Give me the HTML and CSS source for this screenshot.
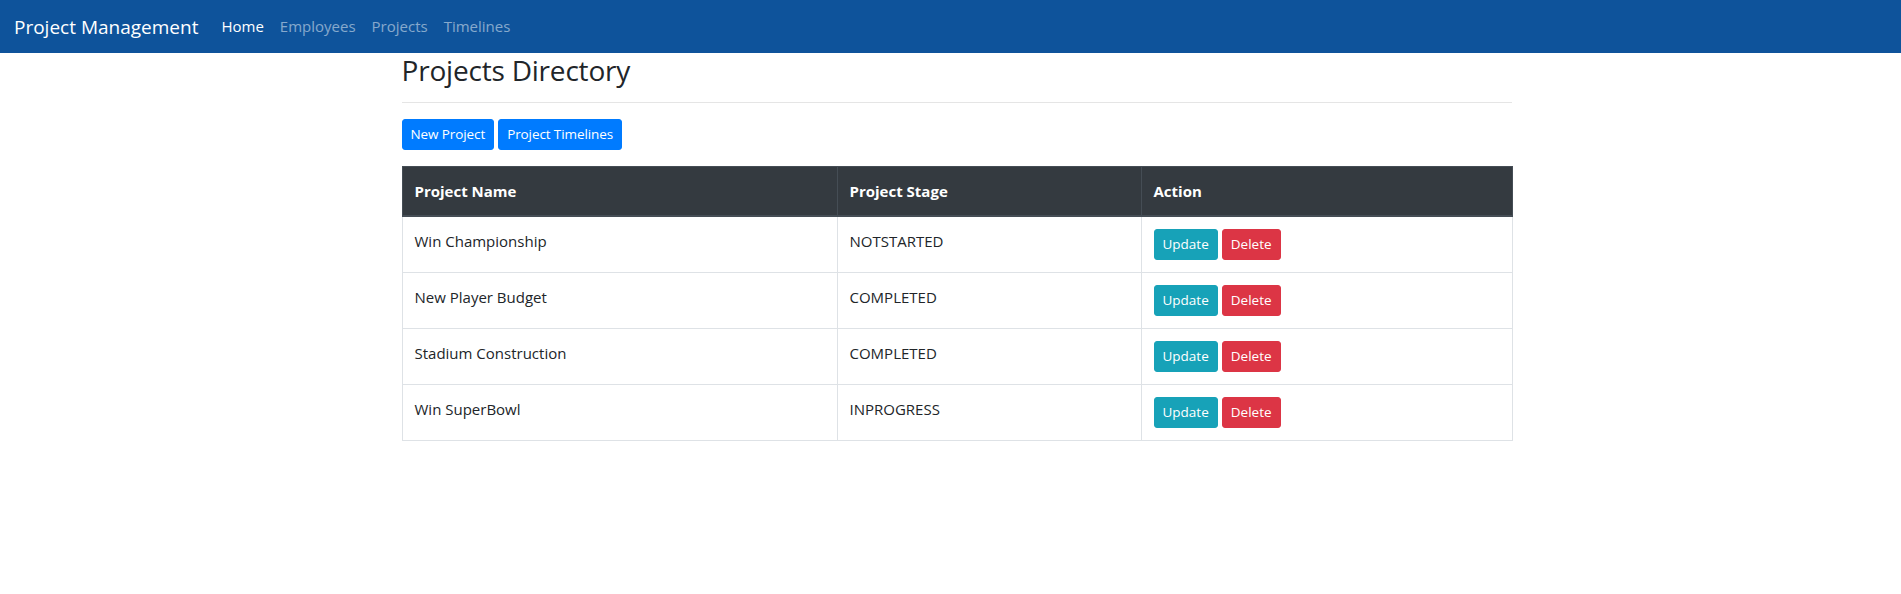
FILE: index.html
```html
<!DOCTYPE html>
<html lang="en">
<head>
<meta charset="utf-8">
<title>Project Management</title>
<link rel="stylesheet" href="styles.css">
</head>
<body>
<nav class="navbar">
  <a class="brand" href="#">Project Management</a>
  <ul class="nav">
    <li><a class="nav-link active" href="#">Home</a></li>
    <li><a class="nav-link" href="#">Employees</a></li>
    <li><a class="nav-link" href="#">Projects</a></li>
    <li><a class="nav-link" href="#">Timelines</a></li>
  </ul>
</nav>
<main class="container">
  <h2 class="title">Projects Directory</h2>
  <hr class="rule">
  <div class="toolbar">
    <a class="btn btn-primary" href="#">New Project</a>
    <a class="btn btn-primary" href="#">Project Timelines</a>
  </div>
  <table class="table">
    <colgroup>
      <col class="col-name">
      <col class="col-stage">
      <col class="col-action">
    </colgroup>
    <thead>
      <tr><th>Project Name</th><th>Project Stage</th><th>Action</th></tr>
    </thead>
    <tbody>
      <tr>
        <td>Win Championship</td><td>NOTSTARTED</td>
        <td><div class="actions"><a class="btn btn-info" href="#">Update</a><a class="btn btn-danger" href="#">Delete</a></div></td>
      </tr>
      <tr>
        <td>New Player Budget</td><td>COMPLETED</td>
        <td><div class="actions"><a class="btn btn-info" href="#">Update</a><a class="btn btn-danger" href="#">Delete</a></div></td>
      </tr>
      <tr>
        <td>Stadium Construction</td><td>COMPLETED</td>
        <td><div class="actions"><a class="btn btn-info" href="#">Update</a><a class="btn btn-danger" href="#">Delete</a></div></td>
      </tr>
      <tr>
        <td>Win SuperBowl</td><td>INPROGRESS</td>
        <td><div class="actions"><a class="btn btn-info" href="#">Update</a><a class="btn btn-danger" href="#">Delete</a></div></td>
      </tr>
    </tbody>
  </table>
</main>
</body>
</html>
```
FILE: styles.css
```css
* { box-sizing: border-box; }
html, body { margin: 0; padding: 0; }
body {
  font-family: "Open Sans", "Noto Sans", "DejaVu Sans", sans-serif;
  font-size: 16px;
  line-height: 1.5;
  color: #212529;
  background: #fff;
}
a { text-decoration: none; }

.navbar {
  display: flex;
  align-items: center;
  height: 53px;
  padding: 0 14px;
  background: #0e539b;
}
.brand {
  color: #fff;
  font-size: 19px;
  line-height: 30px;
  margin-right: 15px;
}
.nav {
  display: flex;
  list-style: none;
  margin: 0;
  padding: 0;
}
.nav-link {
  display: block;
  padding: 8px 8px;
  font-size: 15px;
  color: rgba(255, 255, 255, 0.5);
}
.nav-link.active { color: #fff; }

.container {
  width: 1110px;
  margin-left: calc(50% - 549px);
}
.title {
  margin: 0;
  padding-top: 1px;
  font-size: 28px;
  font-weight: 500;
  line-height: 1.2;
  color: #212529;
  letter-spacing: -0.2px;
}
.rule {
  margin: 14px 0 16px;
  border: 0;
  border-top: 1px solid rgba(0, 0, 0, 0.1);
}
.toolbar {
  display: flex;
  gap: 4px;
  margin-bottom: 16px;
}
.btn {
  display: inline-block;
  padding: 4px 8px;
  font-size: 13.5px;
  line-height: 21px;
  border: 1px solid transparent;
  border-radius: 3px;
  color: #fff;
}
.toolbar .btn { letter-spacing: -0.1px; }
.btn-primary { background: #007bff; border-color: #007bff; }
.btn-info { background: #17a2b8; border-color: #17a2b8; }
.btn-danger { background: #dc3545; border-color: #dc3545; }

.table {
  width: 1110px;
  border-collapse: collapse;
  table-layout: fixed;
}
.col-name { width: 435px; }
.col-stage { width: 304px; }
.col-action { width: 371px; }
.table th,
.table td {
  padding: 12px;
  text-align: left;
  vertical-align: top;
  border: 1px solid #dee2e6;
  font-size: 15px;
  line-height: 24px;
}
.table th {
  background: #343a40;
  color: #fff;
  font-weight: 700;
  border-color: #454d55;
  border-bottom-width: 2px;
  vertical-align: bottom;
}
.actions {
  display: flex;
  gap: 4px;
}
```
